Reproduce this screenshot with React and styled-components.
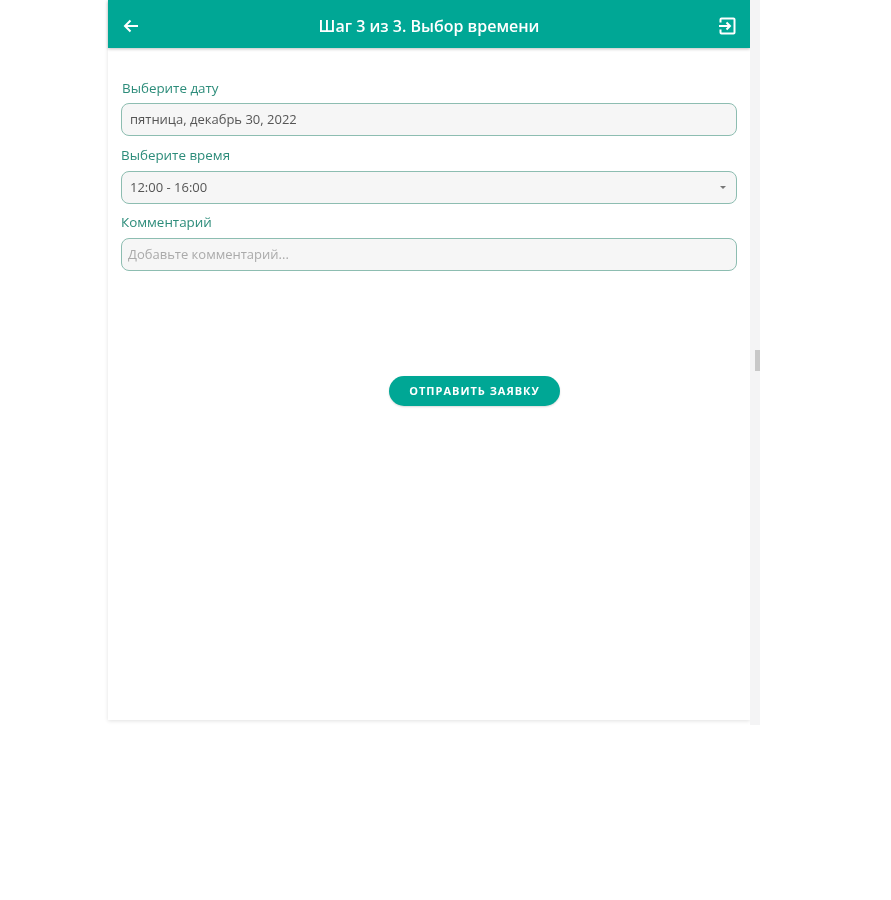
import styled, { createGlobalStyle } from 'styled-components';

const Global = createGlobalStyle`
  html, body { margin: 0; padding: 0; background: #fff; }
  body { font-family: "Open Sans", "Noto Sans", sans-serif; }
`

const Page = styled.div`
  width: 891px;
  height: 900px;
  padding-left: 108px;
  box-sizing: border-box;
  display: flex;
  align-items: flex-start;
  overflow: hidden;
  filter: blur(0.5px);
`

const Card = styled.div`
  width: 642px;
  height: 720px;
  background: #fff;
  box-shadow: 0 1px 4px rgba(0, 0, 0, 0.12);
  display: flex;
  flex-direction: column;
`

const Header = styled.header`
  height: 48px;
  flex: none;
  background: #00a795;
  box-shadow: 0 1px 3px rgba(0, 0, 0, 0.25);
  color: #fff;
  display: flex;
  align-items: center;
  justify-content: space-between;
  padding: 3px 14px 0 14px;
  box-sizing: border-box;
`

const IconBtn = styled.span`
  display: flex;
  width: 18px;
  height: 18px;
  color: #fff;
`

const Title = styled.h1`
  margin: 0;
  font-size: 16px;
  font-weight: 600;
  line-height: 20px;
`

const Body = styled.main`
  padding: 31px 13px 0;
  display: flex;
  flex-direction: column;
`

const Label = styled.label`
  display: block;
  font-size: 13.4px;
  line-height: 19px;
  color: #2c8c7a;
  height: ${({ $first }) => ($first ? 24 : 25)}px;
  margin-left: ${({ $first }) => ($first ? 1 : 0)}px;
`

const Field = styled.div`
  height: 33px;
  width: 616px;
  box-sizing: border-box;
  border: 1.5px solid #8dbdb1;
  border-radius: 8px;
  background: #f6f6f6;
  display: flex;
  align-items: center;
  justify-content: space-between;
  padding: 0 10px 2px ${({ $placeholder }) => ($placeholder ? 6 : 8)}px;
  font-size: 13px;
  color: ${({ $placeholder }) => ($placeholder ? '#aaaaaa' : '#555555')};
  margin-bottom: ${({ $gap }) => $gap || 0}px;
`

const Caret = styled.span`
  width: 0;
  height: 0;
  margin-top: 2px;
  border-left: 3px solid transparent;
  border-right: 3px solid transparent;
  border-top: 3px solid #777;
`

const Send = styled.button`
  align-self: flex-start;
  margin: 105px 0 0 268px;
  width: 171px;
  height: 30px;
  border: 0;
  border-radius: 15px;
  background: #00a795;
  color: #fff;
  font-family: inherit;
  font-size: 11px;
  font-weight: 700;
  letter-spacing: 1px;
  padding: 0 0 2px;
  box-shadow: 0 1px 2px rgba(0, 0, 0, 0.15);
`

const Track = styled.div`
  width: 10px;
  height: 725px;
  background: #f4f4f5;
  padding-top: 350px;
  box-sizing: border-box;
  display: flex;
  justify-content: flex-end;
`

const Thumb = styled.div`
  width: 5px;
  height: 21px;
  background: #c8c8c8;
`

function ArrowLeft() {
  return (
    <svg width="18" height="18" viewBox="0 0 18 18" fill="none" stroke="currentColor" strokeWidth="2">
      <path d="M16 9H3.500M8.500 3.500L3 9L8.500 14.500" />
    </svg>
  )
}

function ExitIcon() {
  return (
    <svg width="18" height="18" viewBox="0 0 18 18" fill="none" stroke="currentColor" strokeWidth="2">
      <path d="M2.500 5.500V2.500a1 1 0 0 1 1-1h12a1 1 0 0 1 1 1v13a1 1 0 0 1-1 1h-12a1 1 0 0 1-1-1v-3" />
      <path d="M1 9h11M8.500 5.500L12 9l-3.500 3.500" />
    </svg>
  )
}

export default function App() {
  return (
    <Page>
      <Global />
      <Card>
        <Header>
          <IconBtn><ArrowLeft /></IconBtn>
          <Title>Шаг 3 из 3. Выбор времени</Title>
          <IconBtn><ExitIcon /></IconBtn>
        </Header>
        <Body>
          <Label $first>Выберите дату</Label>
          <Field $gap={10}>пятница, декабрь 30, 2022</Field>
          <Label>Выберите время</Label>
          <Field $gap={9}>12:00 - 16:00<Caret /></Field>
          <Label>Комментарий</Label>
          <Field $placeholder>Добавьте комментарий...</Field>
          <Send>ОТПРАВИТЬ ЗАЯВКУ</Send>
        </Body>
      </Card>
      <Track><Thumb /></Track>
    </Page>
  )
}
